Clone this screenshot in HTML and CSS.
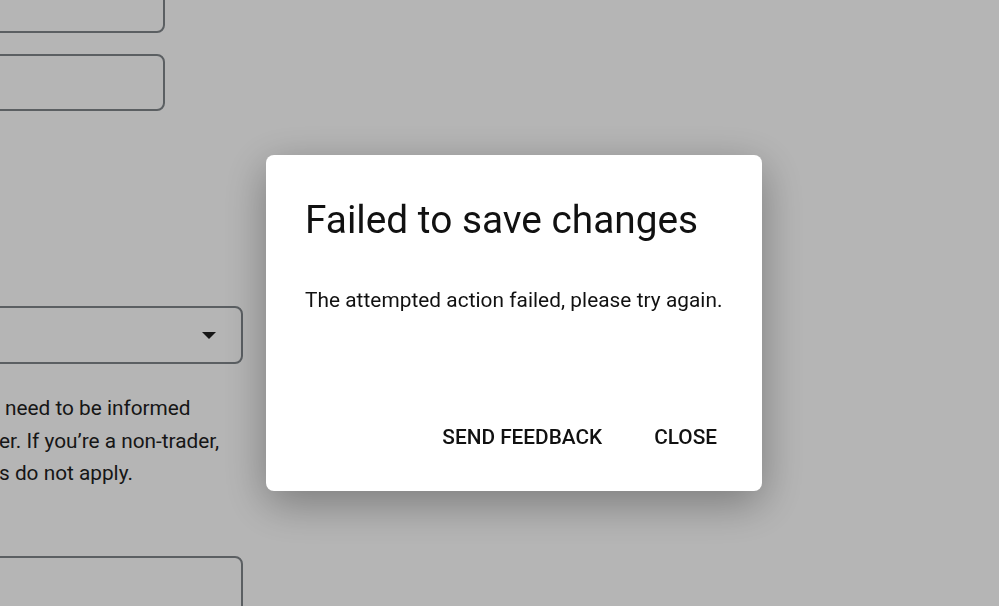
FILE: index.html
```html
<!DOCTYPE html>
<html>
<head>
  <title>Failed to save changes</title>
  <link rel="stylesheet" href="styles.css">
</head>
<body>
  <div class="page">
    <div class="field short first"></div>
    <div class="field short second"></div>

    <div class="field wide select">
      <svg class="arrow" width="14" height="7" viewBox="0 0 14 7"><path d="M0 0h14L7 7z" fill="#1f1f1f"/></svg>
    </div>

    <p class="note">
      <span class="l1">need to be informed</span><br>
      <span class="l2">er. If you’re a non-trader,</span><br>
      <span class="l3">s do not apply.</span>
    </p>

    <div class="field wide last"></div>
  </div>

  <div class="scrim">
    <div class="dialog" role="dialog">
      <h2 class="dialog-title">Failed to save changes</h2>
      <p class="dialog-body">The attempted action failed, please try again.</p>
      <div class="dialog-actions">
        <button class="btn">SEND FEEDBACK</button>
        <button class="btn">CLOSE</button>
      </div>
    </div>
  </div>
</body>
</html>
```

FILE: styles.css
```css
html, body {
  margin: 0;
  height: 100%;
  overflow: hidden;
}

body {
  font-family: Roboto, "Noto Sans", sans-serif;
  background: #ffffff;
  color: #1f1f1f;
}

.page {
  display: flex;
  flex-direction: column;
}

.field {
  box-sizing: border-box;
  height: 57px;
  border: 2px solid #80868b;
  border-radius: 8px;
  margin-left: -300px;
}

.short {
  width: 465px;
}

.wide {
  width: 543px;
}

.first {
  margin-top: -24px;
}

.second {
  margin-top: 21px;
}

.select {
  margin-top: 195px;
  height: 58px;
  display: flex;
  align-items: center;
  justify-content: flex-end;
  padding-right: 25px;
}

.note {
  margin: 28px 0 0;
  font-size: 20.8px;
  line-height: 32.5px;
  white-space: nowrap;
}

.note .l1 {
  padding-left: 5px;
}

.note .l2 {
  margin-left: -1px;
}

.note .l3 {
  margin-left: -1px;
}

.last {
  margin-top: 66px;
}

/* modal layer */
.scrim {
  position: fixed;
  inset: 0;
  background: rgba(0, 0, 0, 0.29);
}

.dialog {
  position: absolute;
  left: 266px;
  top: 155px;
  width: 496px;
  height: 336px;
  box-sizing: border-box;
  padding: 0 37px 0 39px;
  background: #ffffff;
  border-radius: 8px;
  box-shadow: 0 12px 44px rgba(0, 0, 0, 0.33);
  display: flex;
  flex-direction: column;
}

.dialog-title {
  margin: 41px 0 0;
  font-size: 38.8px;
  font-weight: 400;
  line-height: 48px;
  color: #111111;
}

.dialog-body {
  margin: 42px 0 0;
  font-size: 20.8px;
  line-height: 28px;
  letter-spacing: 0.05px;
  color: #111111;
}

.dialog-actions {
  margin-top: auto;
  margin-bottom: 34px;
  display: flex;
  justify-content: flex-end;
  gap: 36px;
}

.btn {
  font-family: Roboto, "Noto Sans", sans-serif;
  font-size: 20.8px;
  font-weight: 500;
  color: #111111;
  background: none;
  border: 0;
  padding: 8px 8px;
  letter-spacing: 0;
}
```
